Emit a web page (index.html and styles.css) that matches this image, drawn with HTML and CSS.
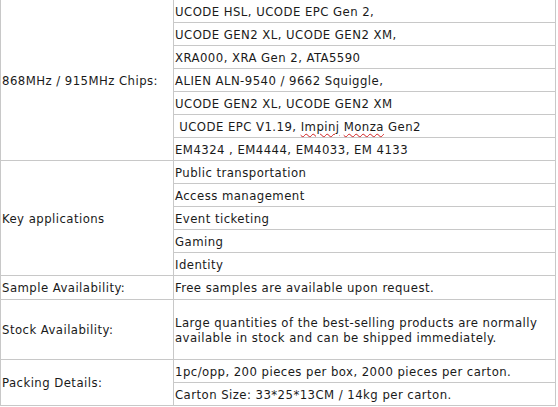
FILE: index.html
```html
<!DOCTYPE html>
<html>
<head>
<meta charset="utf-8">
<link rel="stylesheet" href="styles.css">
</head>
<body>
<table class="spec">
  <tr>
    <td class="label" rowspan="7">868MHz / 915MHz Chips:</td>
    <td>UCODE HSL, UCODE EPC Gen 2,</td>
  </tr>
  <tr><td>UCODE GEN2 XL, UCODE GEN2 XM,</td></tr>
  <tr><td>XRA000, XRA Gen 2, ATA5590</td></tr>
  <tr><td>ALIEN ALN-9540 / 9662 Squiggle,</td></tr>
  <tr><td>UCODE GEN2 XL, UCODE GEN2 XM</td></tr>
  <tr><td>&nbsp;UCODE EPC V1.19, <span class="spell">Impinj</span> <span class="spell">Monza</span> Gen2</td></tr>
  <tr><td>EM4324 , EM4444, EM4033, EM 4133</td></tr>
  <tr>
    <td class="label" rowspan="5">Key applications</td>
    <td>Public transportation</td>
  </tr>
  <tr><td>Access management</td></tr>
  <tr><td>Event ticketing</td></tr>
  <tr><td>Gaming</td></tr>
  <tr><td>Identity</td></tr>
  <tr class="sample">
    <td class="label">Sample Availability:</td>
    <td>Free samples are available upon request.</td>
  </tr>
  <tr class="stock">
    <td class="label">Stock Availability:</td>
    <td>Large quantities of the best-selling products are normally<br>available in stock and can be shipped immediately.</td>
  </tr>
  <tr>
    <td class="label" rowspan="2">Packing Details:</td>
    <td>1pc/opp, 200 pieces per box, 2000 pieces per carton.</td>
  </tr>
  <tr><td>Carton Size: 33*25*13CM / 14kg per carton.</td></tr>
</table>
</body>
</html>
```
FILE: styles.css
```css
html, body {
  margin: 0;
  padding: 0;
  background: #ffffff;
}

.spec {
  border-collapse: collapse;
  margin-top: -1px;
  width: 556px;
  font-family: "DejaVu Sans Condensed", "DejaVu Sans", Tahoma, sans-serif;
  font-size: 13px;
  letter-spacing: 0.45px;
  line-height: 15px;
  color: #1a1a1a;
}

.spec td {
  border: 1px solid #c8c8c8;
  padding: 0 0 0 1px;
  height: 22px;
  vertical-align: middle;
  white-space: nowrap;
}

.spec td.label {
  width: 171px;
}

.spec tr.sample td {
  height: 23px;
}

.spec tr.stock td {
  height: 59px;
}

.spell {
  text-decoration: underline wavy #d02020;
  text-decoration-thickness: 1px;
  text-underline-offset: 2px;
}
```
